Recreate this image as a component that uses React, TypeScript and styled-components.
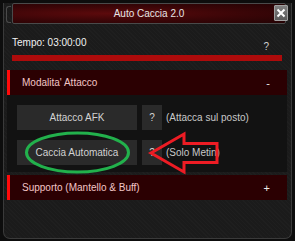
import styled, { createGlobalStyle } from 'styled-components'

const Global = createGlobalStyle`
  html, body {
    margin: 0;
    padding: 0;
    background: #0a0a0a;
  }
  body {
    font-family: "Liberation Sans", Arial, sans-serif;
  }
`

const Window = styled.div`
  position: relative;
  box-sizing: border-box;
  width: 295px;
  height: 241px;
  padding: 3px 3px 0;
  background: #0d0d0d;
`

const Frame = styled.div`
  box-sizing: border-box;
  height: 236px;
  display: flex;
  flex-direction: column;
  background-color: #1b1b1b;
  background-image: repeating-linear-gradient(45deg, rgba(255,255,255,0.015) 0 1px, transparent 1px 3px);
  border: 1px solid #3a3a3a;
  border-top: none;
  border-radius: 0 0 7px 7px;
`

const TitleBar = styled.div`
  position: relative;
  box-sizing: border-box;
  height: 21px;
  margin: 0 5px 0 8px;
  display: flex;
  align-items: center;
  justify-content: center;
  background: radial-gradient(ellipse at 35% 50%, #5c0a0c 0%, #3a0507 55%, #240304 100%);
  border: 1px solid #4a4a4a;
  border-radius: 2px;
  color: #e6e6e6;
  font-size: 10px;

  &::before {
    content: '';
    position: absolute;
    left: -7px;
    top: 2px;
    width: 4px;
    height: 15px;
    border: 1px solid #4a4a4a;
    border-right: none;
    border-radius: 3px 0 0 3px;
  }
`

const CloseButton = styled.div`
  position: absolute;
  right: -3px;
  top: 1px;
  width: 14px;
  height: 16px;
  box-sizing: border-box;
  display: flex;
  align-items: center;
  justify-content: center;
  background: linear-gradient(#808080, #5a5a5a);
  border: 1px solid #a0a0a0;
  border-radius: 1px;
`

const TimerRow = styled.div`
  display: flex;
  justify-content: space-between;
  align-items: flex-end;
  margin: 10px 12px 0 8px;
  height: 14px;
  color: #f2f2f2;
  font-size: 10px;
`

const Hint = styled.span`
  color: #cfcfcf;
  font-size: 10px;
  margin-right: 10px;
  transform: translateY(4px);
`

const ProgressBar = styled.div`
  height: 6px;
  margin: 7px 9px 0 8px;
  background: #ad0b0b;
`

const SectionHeader = styled.div<{ $gap?: number }>`
  box-sizing: border-box;
  height: 25px;
  margin: ${p => p.$gap ?? 9}px 4px 0 3px;
  padding: 0 17px 0 12px;
  display: flex;
  align-items: center;
  justify-content: space-between;
  background: #2b0002;
  border-left: 3px solid #ff0a0a;
  color: #f3c6c6;
  font-size: 10px;
`

const SectionSign = styled.span`
  color: #ececec;
  font-size: 11px;
`

const SectionBody = styled.div`
  margin: 0 4px 0 3px;
  padding: 10px 10px 7px;
  display: flex;
  flex-direction: column;
  gap: 10px;
  background: #121212;
`

const OptionRow = styled.div`
  display: flex;
  align-items: center;
  gap: 5px;
`

const ActionButton = styled.div<{ $narrow?: boolean }>`
  box-sizing: border-box;
  width: ${p => (p.$narrow ? '20px' : '120px')};
  height: 25px;
  display: flex;
  align-items: center;
  justify-content: center;
  background: #2a2a2a;
  color: #d2d2d2;
  font-size: 10px;
`

const OptionNote = styled.span`
  margin-left: -1px;
  color: #c8c8c8;
  font-size: 10px;
`

const Overlay = styled.svg`
  position: absolute;
  left: 0;
  top: 0;
  pointer-events: none;
`

export default function App() {
  return (
    <Window>
      <Global />
      <Frame>
        <TitleBar>
          Auto Caccia 2.0
          <CloseButton>
            <svg width="10" height="10" viewBox="0 0 10 10">
              <path d="M1.5 1.5 L8.5 8.5 M8.5 1.5 L1.5 8.5" stroke="#fff" strokeWidth="2" />
            </svg>
          </CloseButton>
        </TitleBar>
        <TimerRow>
          <span>Tempo: 03:00:00</span>
          <Hint>?</Hint>
        </TimerRow>
        <ProgressBar />
        <SectionHeader>
          <span>Modalita' Attacco</span>
          <SectionSign>-</SectionSign>
        </SectionHeader>
        <SectionBody>
          <OptionRow>
            <ActionButton>Attacco AFK</ActionButton>
            <ActionButton $narrow>?</ActionButton>
            <OptionNote>(Attacca sul posto)</OptionNote>
          </OptionRow>
          <OptionRow>
            <ActionButton>Caccia Automatica</ActionButton>
            <ActionButton $narrow>?</ActionButton>
            <OptionNote>(Solo Metin)</OptionNote>
          </OptionRow>
        </SectionBody>
        <SectionHeader $gap={3}>
          <span>Supporto (Mantello &amp; Buff)</span>
          <SectionSign>+</SectionSign>
        </SectionHeader>
      </Frame>
      <Overlay width="295" height="241" viewBox="0 0 295 241">
        <ellipse cx="77.5" cy="152.5" rx="51" ry="19.5" fill="none" stroke="#22b14c" strokeWidth="3" />
        <path d="M151 153 L184 134 L184 143.5 L217 143.5 L217 162.5 L184 162.5 L184 172 Z" fill="none" stroke="#ed1c24" strokeWidth="3" strokeLinejoin="miter" />
      </Overlay>
    </Window>
  )
}
